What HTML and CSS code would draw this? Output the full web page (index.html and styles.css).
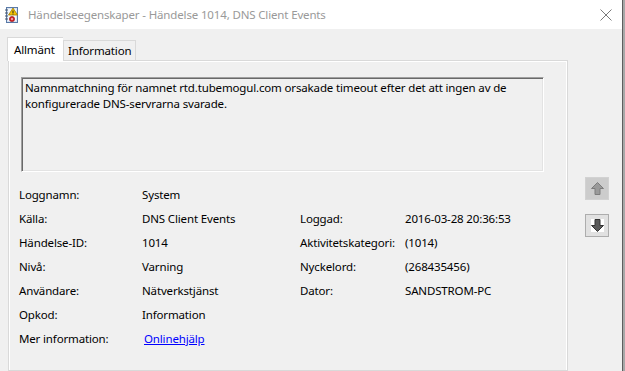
FILE: index.html
```html
<!DOCTYPE html>
<html lang="sv">
  <head>
    <meta charset="UTF-8" />
    <title>Händelseegenskaper</title>
    <link rel="stylesheet" href="styles.css">
  </head>
  <body>
    <div class="window">
      <div class="titlebar">
        <svg class="app-icon" width="16" height="18" viewBox="0 0 16 18">
          <rect x="2.5" y="1.5" width="11" height="15" fill="#d8e4f2" stroke="#5a7aa8"/>
          <rect x="4" y="3" width="8" height="12" fill="#f4f8fc"/>
          <g stroke="#44546a" stroke-width="1">
            <line x1="1" y1="4" x2="4" y2="4"/>
            <line x1="1" y1="7" x2="4" y2="7"/>
            <line x1="1" y1="10" x2="4" y2="10"/>
            <line x1="1" y1="13" x2="4" y2="13"/>
          </g>
          <polygon points="9,2 13.5,9 4.5,9" fill="#f5c400" stroke="#a07800" stroke-width="0.8"/>
          <rect x="8.5" y="4.5" width="1" height="2.5" fill="#222"/>
          <rect x="8.5" y="7.5" width="1" height="1" fill="#222"/>
          <circle cx="8" cy="13" r="2.6" fill="#d8242c" stroke="#8a1010" stroke-width="0.6"/>
          <circle cx="8" cy="13" r="1" fill="#f4c0c0"/>
        </svg>
        <span class="title">Händelseegenskaper - Händelse 1014, DNS Client Events</span>
        <svg class="close" width="12" height="12" viewBox="0 0 12 12">
          <path d="M0.5 0.5 L11.5 11.5 M11.5 0.5 L0.5 11.5" stroke="#7a7a7a" stroke-width="1"/>
        </svg>
      </div>

      <div class="content">
        <div class="sheet">
          <div class="tabs">
            <div class="tab active">Allmänt</div>
            <div class="tab">Information</div>
          </div>
          <div class="panel">
            <div class="message">
              Namnmatchning för namnet rtd.tubemogul.com orsakade timeout efter det att ingen av de
              konfigurerade DNS-servrarna svarade.
            </div>
            <div class="details">
              <span>Loggnamn:</span><span>System</span><span></span><span></span>
              <span>Källa:</span><span>DNS Client Events</span><span>Loggad:</span><span>2016-03-28 20:36:53</span>
              <span>Händelse-ID:</span><span>1014</span><span>Aktivitetskategori:</span><span>(1014)</span>
              <span>Nivå:</span><span>Varning</span><span>Nyckelord:</span><span>(268435456)</span>
              <span>Användare:</span><span>Nätverkstjänst</span><span>Dator:</span><span>SANDSTROM-PC</span>
              <span>Opkod:</span><span>Information</span><span></span><span></span>
              <span>Mer information:</span><span><a class="link" href="#">Onlinehjälp</a></span><span></span><span></span>
            </div>
          </div>
        </div>

        <div class="nav">
          <button class="nav-btn disabled" type="button">
            <svg width="13" height="13" viewBox="0 0 13 13">
              <polygon points="6.5,0.5 12.5,6.5 9,6.5 9,12.5 4,12.5 4,6.5 0.5,6.5" fill="#9a9a9a" stroke="#7c7c7c"/>
            </svg>
          </button>
          <button class="nav-btn" type="button">
            <svg width="13" height="13" viewBox="0 0 13 13">
              <polygon points="6.5,12.5 12.5,6.5 9,6.5 9,0.5 4,0.5 4,6.5 0.5,6.5" fill="#5a5a5a" stroke="#333"/>
            </svg>
          </button>
        </div>
      </div>
    </div>
    <div class="edge"></div>
  </body>
</html>
```

FILE: styles.css
```css
* {
  margin: 0;
  padding: 0;
  box-sizing: border-box;
}

body {
  font-family: "Segoe UI", "Noto Sans", sans-serif;
  font-size: 11.5px;
  letter-spacing: -0.15px;
  color: #000;
  background-color: #f0f0f0;
  width: 625px;
  height: 371px;
  overflow: hidden;
  display: flex;
}

.window {
  flex: 1;
  display: flex;
  flex-direction: column;
}

/* Title bar */
.titlebar {
  height: 29px;
  background-color: #fff;
  display: flex;
  align-items: center;
  padding-left: 4px;
}

.app-icon {
  flex-shrink: 0;
}

.title {
  margin-left: 8px;
  color: #999;
}

.close {
  margin-left: auto;
  margin-right: 10px;
}

/* Content */
.content {
  flex: 1;
  display: flex;
  padding: 8px 0 0 7px;
  overflow: hidden;
}

.sheet {
  width: 561px;
  display: flex;
  flex-direction: column;
}

.tabs {
  display: flex;
  align-items: flex-end;
  height: 23px;
  position: relative;
  z-index: 1;
}

.tab {
  height: 20px;
  padding: 0 4px;
  border: 1px solid #d9d9d9;
  border-bottom: none;
  background-color: #f0f0f0;
  line-height: 19px;
}

.tab.active {
  width: 56px;
  padding-left: 6px;
  background-color: #fff;
  border-right: none;
  margin-bottom: -1px;
  height: 24px;
  line-height: 23px;
}

.panel {
  flex: 1;
  margin-left: 1px;
  border: 1px solid #d9d9d9;
  box-shadow: inset 1px 1px #fff, inset -1px 0 #fff;
  padding: 16px 0 0 12px;
}

.message {
  width: 523px;
  height: 95px;
  padding: 2px 3px;
  line-height: 16px;
  border-top: 1px solid #a0a0a0;
  border-left: 1px solid #a0a0a0;
  border-right: 1px solid #fff;
  border-bottom: 1px solid #fff;
  box-shadow: inset 1px 1px #696969, inset -1px -1px #e3e3e3;
}

.details {
  display: grid;
  grid-template-columns: 123px 158px 105px 1fr;
  grid-auto-rows: 24px;
  align-items: center;
  margin-top: 10px;
  margin-left: -2px;
}

.link {
  color: #0000ff;
  margin-left: 2px;
}

/* Previous / next */
.nav {
  display: flex;
  flex-direction: column;
  gap: 14px;
  margin: 140px 0 0 17px;
}

.nav-btn {
  width: 24px;
  height: 23px;
  display: flex;
  align-items: center;
  justify-content: center;
  border: 1px solid #adadad;
  background-color: #e1e1e1;
}

.nav-btn svg {
  background-color: #fff;
}

.nav-btn.disabled {
  border-color: #d2d2d2;
  background-color: #cccccc;
}

.nav-btn.disabled svg {
  background-color: transparent;
}

.edge {
  width: 3px;
  background-color: #a8a8a8;
  border-left: 1px solid #5e5e5e;
}
```
